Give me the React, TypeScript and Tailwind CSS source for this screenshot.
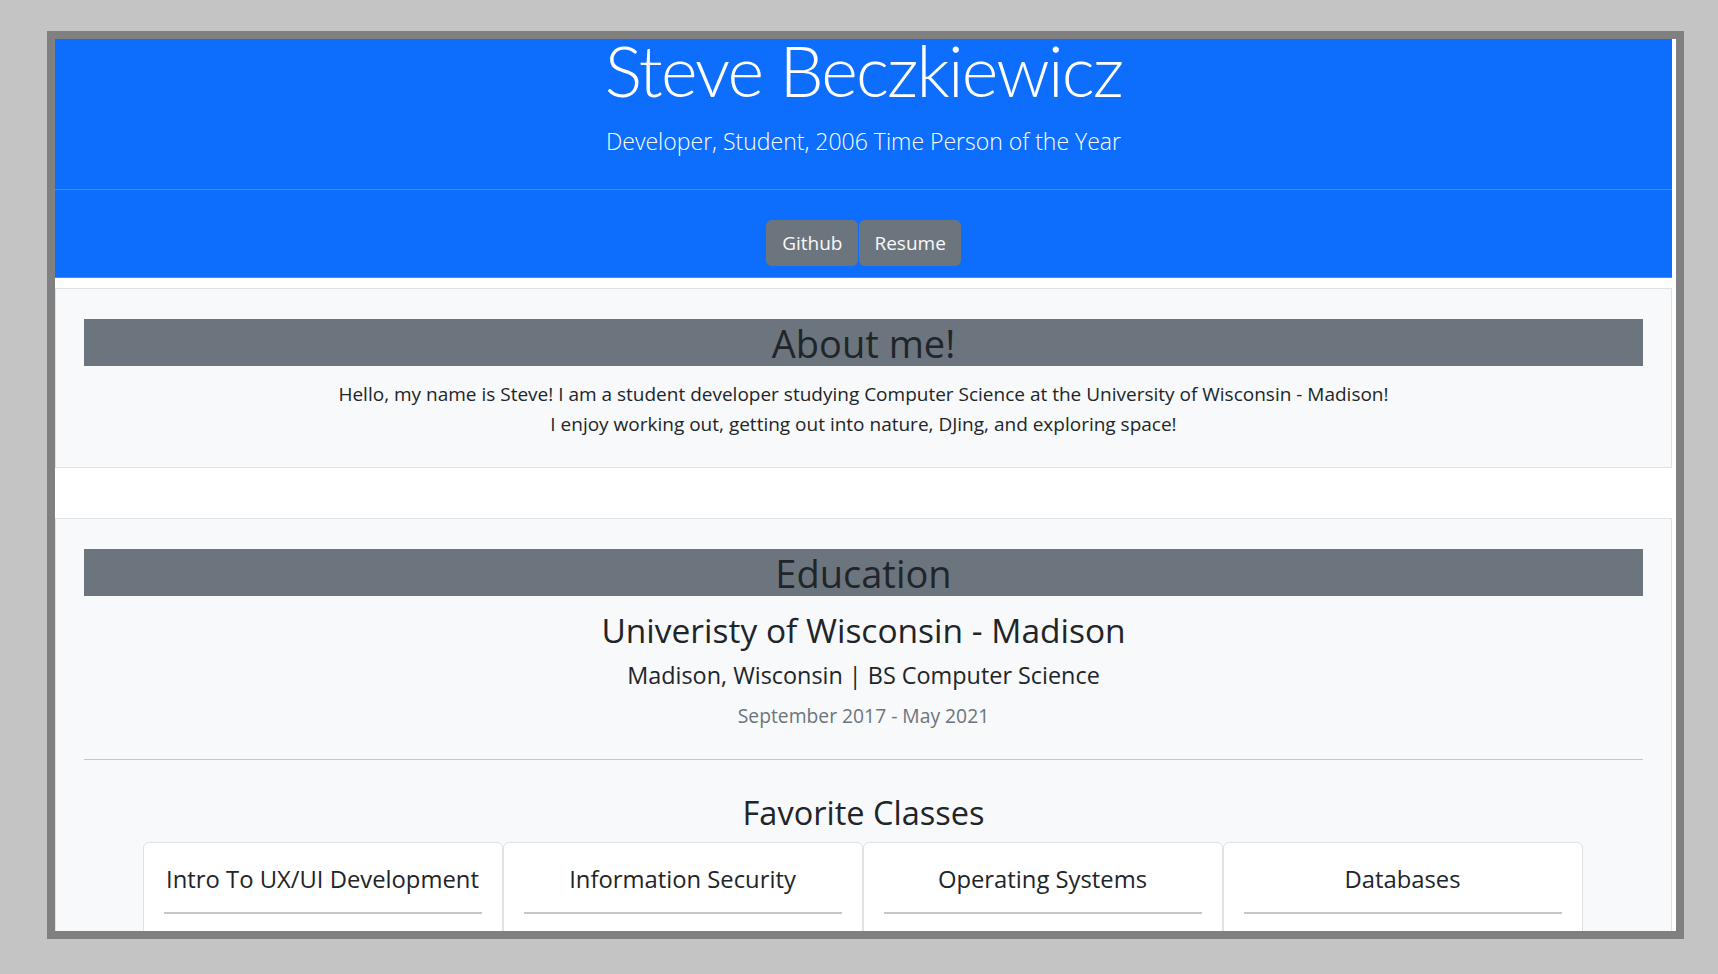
import React from 'react';

const classes = ['Intro To UX/UI Development', 'Information Security', 'Operating Systems', 'Databases'];

const SectionBar = ({ title }: { title: string }) => (
    <div className="h-[47px] bg-[#6c757d] text-center text-[38px] leading-[49px] text-[#212529]">{title}</div>
);

const ClassCard = ({ name }: { name: string }) => (
    <div className="h-[120px] rounded-t-[6px] border border-[#dee2e6] bg-white pt-[22px]">
        <div className="text-center text-[23.8px] leading-[29px] text-[#212529]">{name}</div>
        <div className="mx-[20px] mt-[18px] h-[2px] bg-[#c8c8c8]"></div>
    </div>
);

const App = () => {
    return (
        <div className="h-[974px] w-full overflow-hidden bg-[#c4c4c4] pt-[31px] font-['Segoe_UI','Open_Sans',sans-serif]">
            <div className="ml-[47px] h-[908px] w-[1637px] border-8 border-[#808080] bg-white">
                <div className="w-[1617px]">
                    <header className="h-[239px] border-b border-[#3d8bfd] bg-[#0d6efd] text-center text-white">
                        <div className="flex h-[151px] flex-col border-b border-[#3d8bfd]">
                            <h1 className="-mt-[11px] font-['Lato',sans-serif] text-[70px] font-light leading-[84px] tracking-[-1.8px]">Steve Beczkiewicz</h1>
                            <p className="mt-[13px] text-[23px] font-light leading-[32px]">Developer, Student, 2006 Time Person of the Year</p>
                        </div>
                        <div className="flex justify-center pt-[30px]">
                            <button className="h-[46px] rounded-[6px] bg-[#6c757d] px-[16px] text-[19px] text-[#f8f9fa]">Github</button>
                            <button className="ml-px h-[46px] rounded-[6px] bg-[#6c757d] px-[15px] text-[19px] text-[#f8f9fa]">Resume</button>
                        </div>
                    </header>

                    <main className="h-[653px] overflow-hidden pt-[10px]">
                        <section className="border border-[#dee2e6] bg-[#f8f9fa] px-[28px] pb-[28px] pt-[30px]">
                            <SectionBar title="About me!" />
                            <p className="mt-[13px] text-center text-[19px] leading-[30px] text-[#212529]">
                                Hello, my name is Steve! I am a student developer studying Computer Science at the University of Wisconsin - Madison!
                                <br />
                                I enjoy working out, getting out into nature, DJing, and exploring space!
                            </p>
                        </section>

                        <section className="mt-[50px] border border-[#dee2e6] bg-[#f8f9fa] px-[28px] pt-[30px]">
                            <SectionBar title="Education" />
                            <div className="mt-[15px] text-center text-[33.5px] leading-[38px] text-[#212529]">Univeristy of Wisconsin - Madison</div>
                            <div className="mt-[12px] text-center text-[23.4px] leading-[29px] text-[#212529]">Madison, Wisconsin | BS Computer Science</div>
                            <div className="mt-[11px] text-center text-[19.3px] leading-[30px] text-[#6c757d]">September 2017 - May 2021</div>
                            <hr className="mt-[28px] border-t border-[#c5c7c9]" />
                            <div className="mt-[34px] text-center text-[32.5px] leading-[38px] text-[#212529]">Favorite Classes</div>
                            <div className="mx-auto mt-[10px] grid w-[1440px] -translate-x-px grid-cols-4">
                                {classes.map(c => (
                                    <ClassCard key={c} name={c} />
                                ))}
                            </div>
                        </section>
                    </main>
                </div>
            </div>
        </div>
    );
};

export default App;
